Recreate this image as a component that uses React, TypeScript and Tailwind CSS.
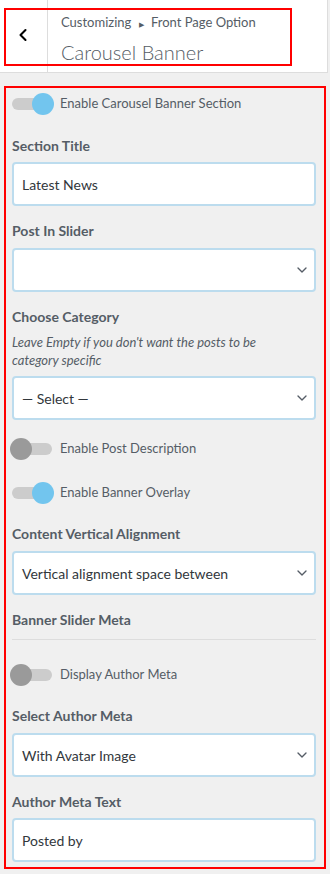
import { ChevronDown, ChevronLeft } from "lucide-react";

type ToggleProps = { on?: boolean; label: string };

function Toggle({ on, label }: ToggleProps) {
  return (
    <div className="flex items-center h-[22px]">
      <div className="relative w-[44px] h-[22px] flex items-center">
        <div className="ml-[2px] w-[40px] h-[12px] rounded-full bg-[#cccccc]" />
        <div
          className={`absolute top-0 w-[22px] h-[22px] rounded-full ${
            on ? "left-[22px] bg-[#72c5ee]" : "left-0 bg-[#9a9a9a]"
          }`}
        />
      </div>
      <span className="ml-[6px] text-[13px] text-[#555d66]">{label}</span>
    </div>
  );
}

function Label({ children }: { children: string }) {
  return <div className="h-5 leading-5 text-[14px] font-bold text-[#555d66]">{children}</div>;
}

function TextBox({ value }: { value: string }) {
  return (
    <div className="mt-[6px] h-[44px] bg-white border-2 border-[#bcdcee] rounded-[4px] flex items-center px-[8px] text-[14px] text-[#32373c]">
      {value}
    </div>
  );
}

function SelectBox({ value }: { value?: string }) {
  return (
    <div className="mt-[7px] h-[44px] bg-white border-2 border-[#bcdcee] rounded-[4px] flex items-center justify-between pl-[8px] pr-[4px] text-[14px] text-[#32373c]">
      <span>{value}</span>
      <ChevronDown size={16} strokeWidth={2} className="text-[#555d66]" />
    </div>
  );
}

export default function App() {
  return (
    <div className="relative w-[330px] min-h-[874px] bg-[#f0f0f0] font-['Lato',sans-serif]">
      {/* Header */}
      <div className="flex h-[73px] w-[328px] bg-white border-b border-r border-[#dddddd]">
        <div className="w-[48px] border-r border-[#dddddd] flex items-center justify-center">
          <ChevronLeft size={20} strokeWidth={2.5} className="text-black -mt-[2px] -ml-[2px]" />
        </div>
        <div className="pl-[13px] pt-[12px]">
          <div className="text-[13px] leading-5 text-[#555d66]">
            Customizing <span className="text-[7px] align-middle mx-[4px]">▶</span> Front Page Option
          </div>
          <div className="mt-[4px] text-[20px] leading-7 font-light text-[#555d66]">Carousel Banner</div>
        </div>
      </div>

      {/* Panel */}
      <div className="px-[12px] pt-[20px] pb-[8px] w-[328px]">
        <div className="-ml-[2px]">
          <Toggle on label="Enable Carousel Banner Section" />
        </div>

        <div className="mt-[21px]">
          <Label>Section Title</Label>
          <TextBox value="Latest News" />
        </div>

        <div className="mt-[15px]">
          <Label>Post In Slider</Label>
          <SelectBox />
        </div>

        <div className="mt-[15px]">
          <Label>Choose Category</Label>
          <div className="mt-[6px] max-w-[262px] text-[13px] leading-[18px] italic text-[#555d66]">
            Leave Empty if you don't want the posts to be category specific
          </div>
          <SelectBox value="— Select —" />
        </div>

        <div className="mt-[18px] -ml-[2px]">
          <Toggle label="Enable Post Description" />
        </div>
        <div className="mt-[22px] -ml-[2px]">
          <Toggle on label="Enable Banner Overlay" />
        </div>

        <div className="mt-[20px]">
          <Label>Content Vertical Alignment</Label>
          <SelectBox value="Vertical alignment space between" />
        </div>

        <div className="mt-[15px]">
          <Label>Banner Slider Meta</Label>
          <div className="mt-[9px] h-px bg-[#dddddd]" />
        </div>

        <div className="mt-[24px] -ml-[2px]">
          <Toggle label="Display Author Meta" />
        </div>

        <div className="mt-[20px]">
          <Label>Select Author Meta</Label>
          <SelectBox value="With Avatar Image" />
        </div>

        <div className="mt-[15px]">
          <Label>Author Meta Text</Label>
          <TextBox value="Posted by" />
        </div>
      </div>

      {/* annotation frames */}
      <div className="absolute left-[4px] top-[8px] w-[288px] h-[58px] border-2 border-[#ff0000] pointer-events-none" />
      <div className="absolute left-[4px] top-[86px] w-[322px] h-[783px] border-2 border-[#ff0000] pointer-events-none" />
    </div>
  );
}
